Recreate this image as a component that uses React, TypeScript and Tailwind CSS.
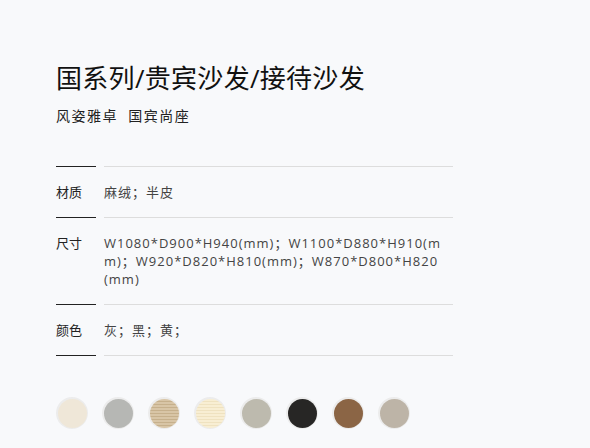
import React from 'react';

interface SpecRow {
  label: string;
  value: string;
}

const specs: SpecRow[] = [
  { label: '材质', value: '麻绒；半皮' },
  {
    label: '尺寸',
    value: 'W1080*D900*H940(mm)；W1100*D880*H910(mm)；W920*D820*H810(mm)；W870*D800*H820(mm)',
  },
  { label: '颜色', value: '灰；黑；黄；' },
];

// 面料色卡
const swatches: string[] = [
  'bg-[#efe7d8]',
  'bg-[#b6b7b4]',
  'bg-[repeating-linear-gradient(0deg,#d8c5a6_0px,#d8c5a6_2px,#c6b08c_2px,#c6b08c_3px)]',
  'bg-[repeating-linear-gradient(0deg,#f8eed3_0px,#f8eed3_2px,#efe2c0_2px,#efe2c0_3px)]',
  'bg-[#bdbaae]',
  'bg-[#272625]',
  'bg-[#8b6545]',
  'bg-[#bdb4a7]',
];

const SpecItem: React.FC<{ row: SpecRow }> = ({ row }) => (
  <div className="flex">
    <div className="w-12 shrink-0">
      <div className="w-10 h-px bg-[#222]" />
      <div className="py-4 text-[13px] leading-[18px] text-[#222]">{row.label}</div>
    </div>
    <div className="flex-1">
      <div className="h-px bg-[#dddddd]" />
      <div className="py-4 text-[13px] leading-[18px] tracking-[1px] text-[#444] break-all">
        {row.value}
      </div>
    </div>
  </div>
);

export default function App() {
  return (
    <div className="w-[590px] h-[448px] bg-[#f8f9fb] pl-14 pt-[60px] overflow-hidden font-['Open_Sans','Noto_Sans_CJK_SC',sans-serif]">
      <h1 className="text-[26px] leading-9 tracking-[0.3px] text-[#111] font-normal">
        国系列/贵宾沙发/接待沙发
      </h1>
      <p className="mt-[10px] text-[14px] leading-5 tracking-[1.5px] text-[#222]">
        风姿雅卓&nbsp;&nbsp;国宾尚座
      </p>

      <div className="mt-[40px] w-[397px]">
        {specs.map((row) => (
          <SpecItem key={row.label} row={row} />
        ))}
        <div className="flex">
          <div className="w-12 shrink-0">
            <div className="w-10 h-px bg-[#222]" />
          </div>
          <div className="flex-1 h-px bg-[#dddddd]" />
        </div>
      </div>

      <div className="mt-[41px] flex gap-[14px]">
        {swatches.map((cls, i) => (
          <div key={i} className="w-8 h-8 rounded-full bg-[#ececec] flex">
            <div className={`w-[29px] h-[29px] rounded-full mt-[2px] ml-[2px] ${cls}`} />
          </div>
        ))}
      </div>
    </div>
  );
}
